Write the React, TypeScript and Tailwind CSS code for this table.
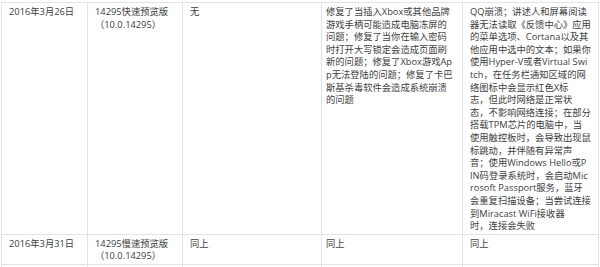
import React from "react";

const col4 = [
  "修复了当插入Xbox或其他品牌",
  "游戏手柄可能造成电脑冻屏的",
  "问题；修复了当你在输入密码",
  "时打开大写锁定会造成页面刷",
  "新的问题；修复了Xbox游戏Ap",
  "p无法登陆的问题；修复了卡巴",
  "斯基杀毒软件会造成系统崩溃",
  "的问题",
];

const col5 = [
  "QQ崩溃；讲述人和屏幕阅读",
  "器无法读取《反馈中心》应用",
  "的菜单选项、Cortana以及其",
  "他应用中选中的文本；如果你",
  "使用Hyper-V或者Virtual Swi",
  "tch，在任务栏通知区域的网",
  "络图标中会显示红色X标",
  "志，但此时网络是正常状",
  "态，不影响网络连接；在部分",
  "搭载TPM芯片的电脑中，当",
  "使用触控板时，会导致出现鼠",
  "标跳动，并伴随有异常声",
  "音；使用Windows Hello或P",
  "IN码登录系统时，会启动Mic",
  "rosoft Passport服务，蓝牙",
  "会重复扫描设备；当尝试连接",
  "到Miracast WiFi接收器",
  "时，连接会失败",
];

function Lines({ lines }: { lines: string[] }) {
  return (
    <>
      {lines.map((l, i) => (
        <div key={i} className="whitespace-nowrap">
          {l}
        </div>
      ))}
    </>
  );
}

const base =
  "border-r border-b border-[#e3e3e3] pr-[2px] pt-[3px] pb-[1px] overflow-hidden";
const cell = base + " pl-[7px]";
const cell4 = base + " pl-[4px]";

export default function App() {
  return (
    <div className="w-[600px] h-[267px] overflow-hidden bg-white pt-[2px] pl-[1px]">
      <div
        className="grid grid-cols-[86px_95px_139px_141px_136px] border-l border-t border-[#e3e3e3] text-[9.3px] leading-[12.6px] text-[#404040]"
        style={{ fontFamily: '"Open Sans", "Noto Sans CJK SC", sans-serif' }}
      >
        <div className={cell}>2016年3月26日</div>
        <div className={cell}>
          <Lines lines={["14295快速预览版", "（10.0.14295）"]} />
        </div>
        <div className={cell}>无</div>
        <div className={cell4}>
          <Lines lines={col4} />
        </div>
        <div className={cell}>
          <Lines lines={col5} />
        </div>

        <div className={cell}>2016年3月31日</div>
        <div className={cell}>
          <Lines lines={["14295慢速预览版", "（10.0.14295）"]} />
        </div>
        <div className={cell}>同上</div>
        <div className={cell4}>同上</div>
        <div className={cell}>同上</div>

        <div className={cell + " h-[40px]"}></div>
        <div className={cell + " h-[40px]"}></div>
        <div className={cell + " h-[40px]"}></div>
        <div className={cell4 + " h-[40px]"}></div>
        <div className={cell + " h-[40px]"}></div>
      </div>
    </div>
  );
}
